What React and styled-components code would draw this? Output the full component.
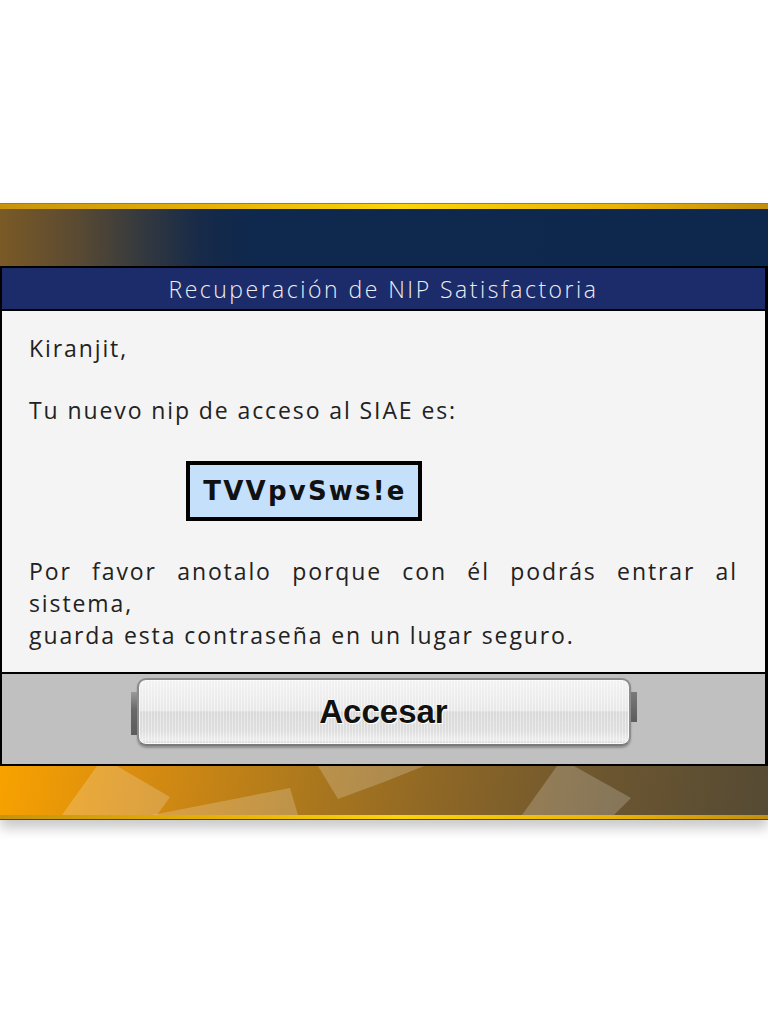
import styled, { createGlobalStyle } from "styled-components";

const GlobalStyle = createGlobalStyle`
  html, body {
    margin: 0;
    padding: 0;
    background: #ffffff;
  }
  body {
    font-family: "Open Sans", "Liberation Sans", sans-serif;
  }
`;

const Page = styled.div`
  width: 768px;
  height: 1024px;
  padding-top: 203px;
  box-sizing: border-box;
  overflow: hidden;
`;

const Frame = styled.div`
  display: flex;
  flex-direction: column;
  box-shadow: 0 8px 12px rgba(0, 0, 0, 0.22);
`;

const GoldLine = styled.div`
  height: ${(p) => p.h}px;
  background: linear-gradient(
    90deg,
    #c8930c 0%,
    #e8b406 30%,
    #fbd40a 52%,
    #e9b406 80%,
    #c38e0c 100%
  );
  border-top: ${(p) => (p.top ? "1px solid #9a7a3a" : "none")};
  border-bottom: ${(p) => (p.bottom ? "1px solid #4a4538" : "none")};
`;

const HeaderBand = styled.div`
  height: 57px;
  background: linear-gradient(
    90deg,
    #7a5a26 0%,
    #5a4a32 10%,
    #363a3e 18%,
    #172a48 26%,
    #0f284d 32%,
    #0e284d 100%
  );
`;

const Dialog = styled.div`
  border: 2px solid #000;
  border-right-width: 3px;
  display: flex;
  flex-direction: column;
`;

const TitleBar = styled.div`
  height: 41px;
  background: #1c2b6a;
  border-bottom: 2px solid #000;
  display: flex;
  align-items: center;
  justify-content: center;
  color: #eceef4;
  font-size: 23px;
  font-weight: 300;
  letter-spacing: 2.5px;
`;

const Body = styled.div`
  height: 361px;
  box-sizing: border-box;
  background: #f4f4f4;
  padding: 21px 27px 0 27px;
  color: #222;
  font-size: 23px;
  font-weight: 400;
  line-height: 32px;
  letter-spacing: 1.9px;
`;

const Para = styled.p`
  margin: 0 0 ${(p) => p.gap || 0}px 0;
  text-align: ${(p) => (p.justify ? "justify" : "left")};
`;

const PassBox = styled.div`
  margin: 35px 0 34px 157px;
  width: 236px;
  height: 60px;
  box-sizing: border-box;
  border: 4px solid #000;
  background: #c5e0fb;
  display: flex;
  align-items: center;
  justify-content: center;
  font-family: "DejaVu Sans", "Liberation Sans", sans-serif;
  font-weight: bold;
  font-size: 26px;
  letter-spacing: 2.2px;
  color: #111;
  padding-left: 2px;
`;

const Footer = styled.div`
  height: 92px;
  background: #c0c0c0;
  border-top: 2px solid #000;
  display: flex;
  justify-content: center;
  align-items: flex-start;
  padding-top: 4px;
  box-sizing: border-box;
`;

const Button = styled.button`
  position: relative;
  width: 494px;
  height: 68px;
  box-sizing: border-box;
  border: 2px solid #8c8c8c;
  border-bottom-color: #7a7a7a;
  border-radius: 9px;
  background:
    repeating-linear-gradient(
      90deg,
      rgba(255, 255, 255, 0.35) 0px,
      rgba(255, 255, 255, 0.35) 1px,
      rgba(0, 0, 0, 0.015) 1px,
      rgba(0, 0, 0, 0.015) 3px
    ),
    linear-gradient(
      180deg,
      #f6f6f6 0%,
      #ececec 48%,
      #dcdcdc 50%,
      #e2e2e2 80%,
      #f0f0f0 94%,
      #d6d6d6 100%
    );
  box-shadow: 0 2px 2px rgba(0, 0, 0, 0.25), inset 0 0 0 1px #fafafa;
  font-family: "Liberation Sans", Arial, sans-serif;
  font-weight: bold;
  font-size: 33px;
  color: #111;
  text-shadow: 0 0 2px #fff, 1px 1px 0 #fff;
  cursor: pointer;
  padding: 0;

  &::before {
    content: "";
    position: absolute;
    left: -8px;
    top: 12px;
    width: 6px;
    height: 43px;
    background: linear-gradient(180deg, #9a9a9a 0%, #6a6a6a 40%, #5c5c5c 100%);
  }

  &::after {
    content: "";
    position: absolute;
    right: -8px;
    top: 12px;
    width: 6px;
    height: 30px;
    background: linear-gradient(180deg, #7a7a7a 0%, #5c5c5c 100%);
  }
`;

const BottomBand = styled.div`
  height: 49px;
  background: linear-gradient(
    100deg,
    #f8a200 0%,
    #d88c10 18%,
    #b07a1c 38%,
    #8c6626 58%,
    #6c5630 78%,
    #554a34 100%
  );
  svg {
    display: block;
  }
`;

function Shapes() {
  return (
    <svg width="768" height="49" viewBox="0 0 768 49">
      <g fill="#ffffff" fillOpacity="0.2">
        <polygon points="97,0 117,0 170,31 157,49 62,49" />
        <polygon points="152,49 290,22 298,49" />
        <polygon points="318,0 424,0 384,16 338,33" />
        <polygon points="557,0 574,0 631,32 614,49 522,49" />
      </g>
    </svg>
  );
}

export default function App() {
  return (
    <Page>
      <GlobalStyle />
      <Frame>
        <GoldLine h={5} top />
        <HeaderBand />
        <Dialog>
          <TitleBar>Recuperación de NIP Satisfactoria</TitleBar>
          <Body>
            <Para gap={30}>Kiranjit,</Para>
            <Para>Tu nuevo nip de acceso al SIAE es:</Para>
            <PassBox>TVVpvSws!e</PassBox>
            <Para justify>
              Por favor anotalo porque con él podrás entrar al sistema,
            </Para>
            <Para>guarda esta contraseña en un lugar seguro.</Para>
          </Body>
          <Footer>
            <Button>Accesar</Button>
          </Footer>
        </Dialog>
        <BottomBand>
          <Shapes />
        </BottomBand>
        <GoldLine h={4} bottom />
      </Frame>
    </Page>
  );
}
